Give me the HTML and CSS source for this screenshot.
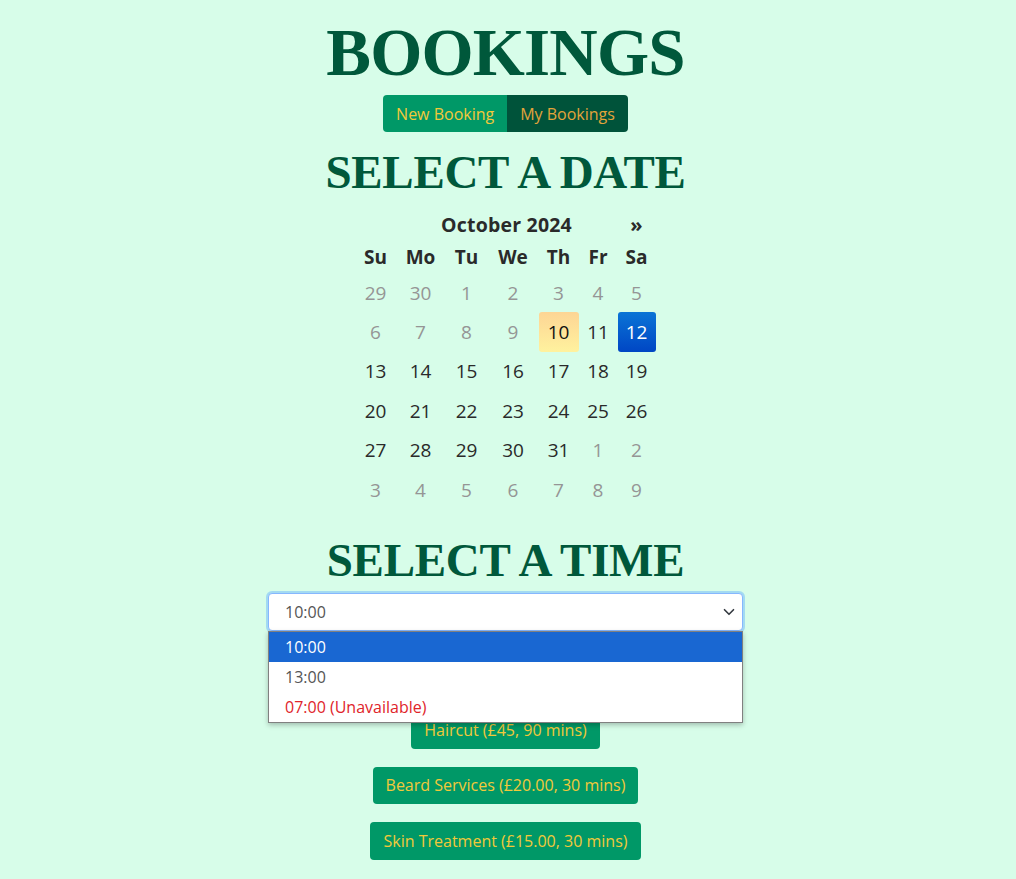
FILE: index.html
```html
<!DOCTYPE html>
<html>
<head>
<meta charset="utf-8">
<link rel="stylesheet" href="styles.css">
</head>
<body>
<main class="page">
  <h1 class="title">BOOKINGS</h1>
  <nav class="tabs">
    <button class="tab tab-new">New Booking</button>
    <button class="tab tab-mine">My Bookings</button>
  </nav>
  <h2 class="heading">SELECT A DATE</h2>
  <div class="calendar">
    <div class="cal-nav"></div>
    <div class="cal-label">October 2024</div>
    <div class="cal-nav">»</div>

    <div class="wd">Su</div><div class="wd">Mo</div><div class="wd">Tu</div><div class="wd">We</div><div class="wd">Th</div><div class="wd">Fr</div><div class="wd">Sa</div>

    <div class="day off">29</div><div class="day off">30</div><div class="day off">1</div><div class="day off">2</div><div class="day off">3</div><div class="day off">4</div><div class="day off">5</div>
    <div class="day off">6</div><div class="day off">7</div><div class="day off">8</div><div class="day off">9</div><div class="day today">10</div><div class="day">11</div><div class="day active">12</div>
    <div class="day">13</div><div class="day">14</div><div class="day">15</div><div class="day">16</div><div class="day">17</div><div class="day">18</div><div class="day">19</div>
    <div class="day">20</div><div class="day">21</div><div class="day">22</div><div class="day">23</div><div class="day">24</div><div class="day">25</div><div class="day">26</div>
    <div class="day">27</div><div class="day">28</div><div class="day">29</div><div class="day">30</div><div class="day">31</div><div class="day off">1</div><div class="day off">2</div>
    <div class="day off">3</div><div class="day off">4</div><div class="day off">5</div><div class="day off">6</div><div class="day off">7</div><div class="day off">8</div><div class="day off">9</div>
  </div>
  <h2 class="heading heading-time">SELECT A TIME</h2>
  <div class="select-wrap">
    <div class="select">
      <span>10:00</span>
      <svg class="chev" width="12" height="12" viewBox="0 0 16 16"><path d="M2 5l6 6 6-6" fill="none" stroke="#343a40" stroke-width="2.2" stroke-linecap="round" stroke-linejoin="round"/></svg>
    </div>
    <ul class="options">
      <li class="opt opt-sel">10:00</li>
      <li class="opt">13:00</li>
      <li class="opt opt-na">07:00 (Unavailable)</li>
    </ul>
  </div>
  <div class="services">
    <button class="svc">Haircut (£45, 90 mins)</button>
    <button class="svc">Beard Services (£20.00, 30 mins)</button>
    <button class="svc">Skin Treatment (£15.00, 30 mins)</button>
  </div>
</main>
</body>
</html>
```

FILE: styles.css
```css
html, body {
  margin: 0;
  padding: 0;
  background: #d7fde9;
}
body {
  font-family: "Open Sans", "Noto Sans", sans-serif;
  color: #222;
}
.page {
  display: flex;
  flex-direction: column;
  align-items: center;
  padding-top: 19px;
  padding-right: 5px;
}
.title {
  margin: 0;
  font-family: "Liberation Serif", serif;
  font-weight: 700;
  font-size: 67px;
  line-height: 66px;
  color: #00583b;
  letter-spacing: -0.8px;
}
.tabs {
  display: flex;
  margin-top: 10px;
  border-radius: 4px;
  overflow: hidden;
}
.tab {
  border: 0;
  margin: 0;
  font-family: "Open Sans", sans-serif;
  font-size: 16px;
  line-height: 25px;
  padding: 7px 13px 5px;
  height: 37px;
  white-space: nowrap;
}
.tab-new {
  background: #009867;
  color: #f2c93a;
}
.tab-mine {
  background: #00533a;
  color: #e3a43b;
}
.heading {
  margin: 0;
  margin-top: 17px;
  font-family: "Liberation Serif", serif;
  font-weight: 700;
  font-size: 47px;
  line-height: 46px;
  color: #00583b;
  letter-spacing: -0.3px;
}
.calendar {
  margin-top: 13px;
  display: grid;
  grid-template-columns: 40px 50px 42px 51px 40px 39px 38px;
  grid-auto-rows: 39.4px;
  grid-template-rows: 33px 32px;
  font-size: 19px;
}
.cal-nav, .cal-label {
  font-weight: 700;
  display: flex;
  align-items: center;
  justify-content: center;
  color: #2a2a2a;
}
.cal-label {
  grid-column: span 5;
  font-size: 19.5px;
  letter-spacing: 0.2px;
}
.cal-nav {
  font-size: 20px;
}
.wd {
  font-weight: 700;
  display: flex;
  align-items: center;
  justify-content: center;
  color: #2a2a2a;
}
.day {
  display: flex;
  align-items: center;
  justify-content: center;
  color: #2a2a2a;
  border-radius: 3px;
}
.day.off {
  color: #959595;
}
.day.today {
  background: linear-gradient(#fdd595, #fff29e);
  color: #111;
}
.day.active {
  background: linear-gradient(#0a74d6, #0046c4);
  color: #fff;
}
.heading-time {
  margin-top: 28px;
}
.select-wrap {
  position: relative;
  margin-top: 10px;
  width: 475px;
}
.select {
  box-sizing: border-box;
  height: 38px;
  background: #fff;
  border: 1px solid #86b7fe;
  border-radius: 4px;
  box-shadow: 0 0 0 2px rgba(120, 190, 250, 0.55);
  display: flex;
  align-items: center;
  justify-content: space-between;
  padding: 0 7px 0 16px;
  font-size: 16px;
  color: #555;
}
.chev {
  display: block;
}
.options {
  position: absolute;
  left: 0;
  top: 38px;
  width: 475px;
  box-sizing: border-box;
  margin: 0;
  padding: 0;
  list-style: none;
  background: #fff;
  border: 1px solid #808080;
  box-shadow: 0 2px 5px rgba(0, 0, 0, 0.25);
  z-index: 2;
}
.opt {
  height: 30px;
  line-height: 30px;
  padding-left: 16px;
  font-size: 16px;
  color: #555;
}
.opt-sel {
  background: #1967d2;
  color: #fff;
}
.opt-na {
  color: #e0242a;
}
.services {
  display: flex;
  flex-direction: column;
  align-items: center;
  gap: 18px;
  margin-top: 80px;
}
.svc {
  border: 0;
  background: #009867;
  color: #f2c93a;
  font-family: "Open Sans", sans-serif;
  font-size: 16px;
  line-height: 25px;
  padding: 6px 13px;
  height: 37.5px;
  border-radius: 4px;
}
```
